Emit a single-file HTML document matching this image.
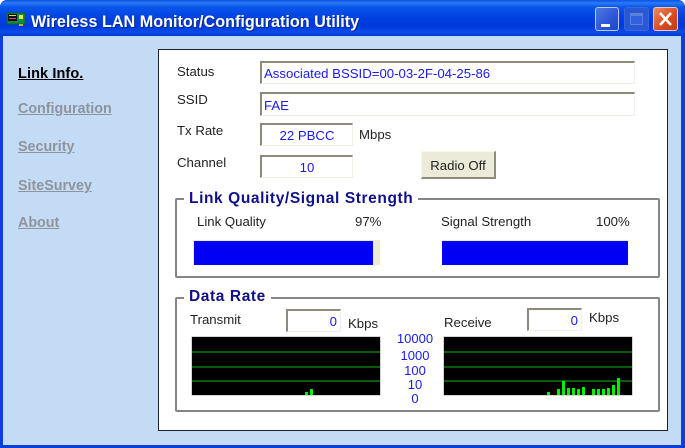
<!DOCTYPE html>
<html><head><meta charset="utf-8"><style>
html,body{margin:0;padding:0;background:#fff}
#w{position:relative;width:685px;height:448px;overflow:hidden;font-family:"Liberation Sans",sans-serif;font-size:13.2px;color:#222;filter:blur(.35px)}
#w div{position:absolute;white-space:nowrap}
.t{line-height:16px}
.f{box-sizing:border-box;background:#fff;border:1px solid #f3eee8;border-top:2px solid #8d897c;border-left:2px solid #8d897c;color:#1a1aee;line-height:21px;text-align:center}
.g{box-sizing:border-box;border:2px solid #858585;border-radius:2px}
.lg{background:#fff;color:#10108a;font-weight:bold;font-size:15.5px;line-height:18px;padding:0 5px;letter-spacing:.6px}
.gr{background:#000;box-shadow:0 0 0 .5px #aaa}
.ln{height:2px;background:#0a5c0a;left:0;right:0}
.b{background:#00f000;width:3px;bottom:0}
.n{font-weight:bold;font-size:14.3px;color:#8e949c;text-decoration:underline;line-height:18px}
.sc{color:#1a1aee;text-align:center;width:50px;left:390px;line-height:14px;font-size:13px}
</style></head><body><div id="w">
<div style="left:0;top:0;width:685px;height:448px;background:#0a3fdc;border-radius:7px 7px 0 0"></div>
<div style="left:0;top:0;width:685px;height:36px;border-radius:7px 7px 0 0;background:linear-gradient(#0a50e4 0,#2a7af5 3px,#0a56ea 7px,#0040e0 18px,#0038dc 26px,#0a4cea 32px,#003ad0 36px)"></div>
<div style="left:3px;top:36px;width:678px;height:409px;background:#c4dbf6"></div>

<svg style="position:absolute;left:6px;top:11px" width="20" height="16" viewBox="0 0 20 16">
<rect x="1" y="2" width="18" height="11" fill="#1a8a3a" stroke="#063"/><rect x="2" y="3" width="9" height="7" fill="#112"/><rect x="3" y="4" width="7" height="1" fill="#dd4"/><rect x="3" y="7" width="7" height="1" fill="#d44"/><rect x="13" y="4" width="4" height="4" fill="#dfe860"/><rect x="13" y="13" width="4" height="2" fill="#c8b040"/></svg>
<div style="left:31px;top:12px;color:#fff;font-weight:bold;font-size:16.2px;line-height:20px;text-shadow:1px 1px 0 #0a2a90">Wireless LAN Monitor/Configuration Utility</div>

<div style="left:595px;top:7px;width:24px;height:24px;box-sizing:border-box;border:1px solid #b8c8ee;border-radius:3px;background:linear-gradient(135deg,#5078e0,#2a55d8 60%,#2048c8)"></div>
<div style="left:601px;top:24px;width:9px;height:3px;background:#fff"></div>
<div style="left:624px;top:7px;width:25px;height:24px;box-sizing:border-box;border:1px solid #3a66d8;border-radius:3px;background:#2a58d4"></div>
<div style="left:630px;top:13px;width:13px;height:12px;box-sizing:border-box;border:1px solid #5e80dc;border-top:3px solid #5e80dc;background:#3260dc"></div>
<div style="left:653px;top:7px;width:25px;height:24px;box-sizing:border-box;border:1px solid #e8c8b8;border-radius:3px;background:linear-gradient(135deg,#ec8a60,#d84a20 60%,#c03a18)"></div>
<svg style="position:absolute;left:653px;top:7px" width="25" height="24"><path d="M7 6L18 18M18 6L7 18" stroke="#fff" stroke-width="2.6"/></svg>

<div class="n" style="left:18px;top:65px;color:#000;font-size:14.5px;letter-spacing:.1px">Link Info.</div>
<div class="n" style="left:18px;top:100px">Configuration</div>
<div class="n" style="left:18px;top:138px">Security</div>
<div class="n" style="left:18px;top:177px">SiteSurvey</div>
<div class="n" style="left:18px;top:214px">About</div>

<div style="left:158px;top:49px;width:510px;height:382px;box-sizing:border-box;background:#fff;border:1.5px solid #222"></div>

<div class="t" style="left:177px;top:64px">Status</div>
<div class="t" style="left:177px;top:92px">SSID</div>
<div class="t" style="left:177px;top:123px">Tx Rate</div>
<div class="t" style="left:177px;top:155px">Channel</div>
<div class="f" style="left:260px;top:61px;width:375px;height:23px;text-align:left;padding-left:2px">Associated BSSID=00-03-2F-04-25-86</div>
<div class="f" style="left:260px;top:92px;width:375px;height:24px;text-align:left;padding-left:2px;line-height:23px">FAE</div>
<div class="f" style="left:260px;top:123px;width:93px;height:23px">22 PBCC</div>
<div class="f" style="left:260px;top:155px;width:93px;height:23px">10</div>
<div class="t" style="left:359px;top:127px">Mbps</div>
<div style="left:421px;top:151px;width:75px;height:28px;box-sizing:border-box;background:#ecead9;border:1px solid #f8f8f0;border-right:2px solid #8f8c7c;border-bottom:2px solid #8f8c7c;text-align:center;line-height:27px">Radio Off</div>

<div class="g" style="left:175px;top:198px;width:485px;height:80px"></div>
<div class="lg" style="left:184px;top:190px">Link Quality/Signal Strength</div>
<div class="t" style="left:197px;top:214px">Link Quality</div>
<div class="t" style="left:355px;top:214px">97%</div>
<div class="t" style="left:441px;top:214px">Signal Strength</div>
<div class="t" style="left:596px;top:214px">100%</div>
<div style="left:193px;top:240px;width:187px;height:25px;background:#ecead9"></div>
<div style="left:194px;top:241px;width:179px;height:24px;background:#0000f4"></div>
<div style="left:442px;top:240px;width:186px;height:25px;background:#ecead9"></div>
<div style="left:442px;top:241px;width:186px;height:24px;background:#0000f4"></div>

<div class="g" style="left:175px;top:297px;width:485px;height:115px"></div>
<div class="lg" style="left:184px;top:288px">Data Rate</div>
<div class="t" style="left:190px;top:312px">Transmit</div>
<div class="t" style="left:348px;top:316px">Kbps</div>
<div class="t" style="left:444px;top:315px">Receive</div>
<div class="t" style="left:589px;top:310px">Kbps</div>
<div class="f" style="left:286px;top:309px;width:55px;height:23px;text-align:right;padding-right:3px">0</div>
<div class="f" style="left:527px;top:308px;width:55px;height:23px;text-align:right;padding-right:3px">0</div>

<div class="gr" style="left:192px;top:337px;width:188px;height:58px">
<div class="ln" style="top:14px"></div><div class="ln" style="top:29px"></div><div class="ln" style="top:43px"></div>
<div class="b" style="left:113px;height:3px"></div><div class="b" style="left:118px;height:6px"></div>
</div>
<div class="gr" style="left:444px;top:337px;width:188px;height:58px">
<div class="ln" style="top:14px"></div><div class="ln" style="top:29px"></div><div class="ln" style="top:43px"></div>
<div class="b" style="left:103px;height:3px"></div><div class="b" style="left:113px;height:6px"></div><div class="b" style="left:118px;height:14px"></div><div class="b" style="left:123px;height:7px"></div><div class="b" style="left:128px;height:7px"></div><div class="b" style="left:133px;height:6px"></div><div class="b" style="left:138px;height:8px"></div><div class="b" style="left:148px;height:6px"></div><div class="b" style="left:153px;height:6px"></div><div class="b" style="left:158px;height:6px"></div><div class="b" style="left:163px;height:7px"></div><div class="b" style="left:168px;height:10px"></div><div class="b" style="left:173px;height:17px"></div>
</div>

<div class="sc" style="top:332px">10000</div>
<div class="sc" style="top:349px">1000</div>
<div class="sc" style="top:364px">100</div>
<div class="sc" style="top:378px">10</div>
<div class="sc" style="top:392px">0</div>
</div></body></html>
